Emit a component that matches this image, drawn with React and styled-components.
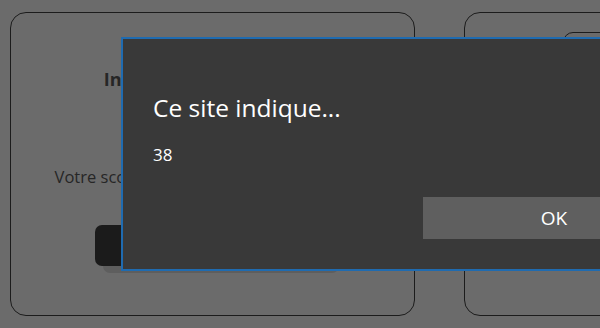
import React from 'react'
import styled, { createGlobalStyle } from 'styled-components'

const GlobalStyle = createGlobalStyle`
    html, body {
        margin: 0;
        padding: 0;
        width: 600px;
        height: 328px;
        overflow: hidden;
        background: #6b6b6b;
        font-family: "Open Sans", "Noto Sans", sans-serif;
    }
`

const Page = styled.main`
    position: relative;
    display: flex;
    gap: 49px;
    padding: 12px 0 0 10px;
    width: 600px;
    height: 328px;
    box-sizing: border-box;
    overflow: hidden;
`

const Card = styled.section`
    flex: 0 0 ${props => props.width}px;
    height: 304px;
    box-sizing: border-box;
    border: 1px solid #1c1c1c;
    border-radius: 16px;
    display: flex;
    flex-direction: column;
    align-items: center;
    padding-top: 54px;
    color: #262626;
`

const Title = styled.h2`
    margin: 0;
    font-size: 18px;
    font-weight: 700;
    line-height: 24px;
    white-space: nowrap;
`

const Score = styled.p`
    margin: 75px 0 0;
    font-size: 16.5px;
    line-height: 22px;
    white-space: nowrap;
`

const PlayButton = styled.button`
    margin-top: 37px;
    width: 236px;
    height: 41px;
    border: none;
    border-radius: 7px;
    background: #1b1b1b;
    box-shadow: 8px 7px 0 rgba(0, 0, 0, 0.12);
`

const SideHead = styled.div`
    align-self: flex-end;
    margin: -35px -40px 0 0;
    width: 138px;
    height: 40px;
    border: 1px solid #1c1c1c;
    border-radius: 10px;
`

const Dialog = styled.div`
    position: absolute;
    left: 121px;
    top: 37px;
    width: 600px;
    height: 234px;
    box-sizing: border-box;
    border: 2px solid #1f6bb0;
    background: #393939;
    color: #fff;
    padding: 53px 0 0 30px;
`

const DialogTitle = styled.div`
    font-size: 24.5px;
    line-height: 32px;
    font-weight: 400;
`

const DialogText = styled.div`
    margin-top: 19px;
    font-size: 17px;
    line-height: 24px;
`

const DialogActions = styled.div`
    display: flex;
    margin: 30px 0 0 270px;
`

const OkButton = styled.button`
    width: 262px;
    height: 42px;
    border: none;
    background: #5f5f5f;
    color: #fff;
    font-family: inherit;
    font-size: 19px;
`

const App = () => {
    return (
        <>
            <GlobalStyle />
            <Page>
                <Card width={405}>
                    <Title>Indiquez votre score ici :</Title>
                    <Score>Votre score actuel est donc de : 38 points</Score>
                    <PlayButton />
                </Card>
                <Card width={200}>
                    <SideHead />
                </Card>
                <Dialog>
                    <DialogTitle>Ce site indique...</DialogTitle>
                    <DialogText>38</DialogText>
                    <DialogActions>
                        <OkButton>OK</OkButton>
                    </DialogActions>
                </Dialog>
            </Page>
        </>
    )
}

export default App
